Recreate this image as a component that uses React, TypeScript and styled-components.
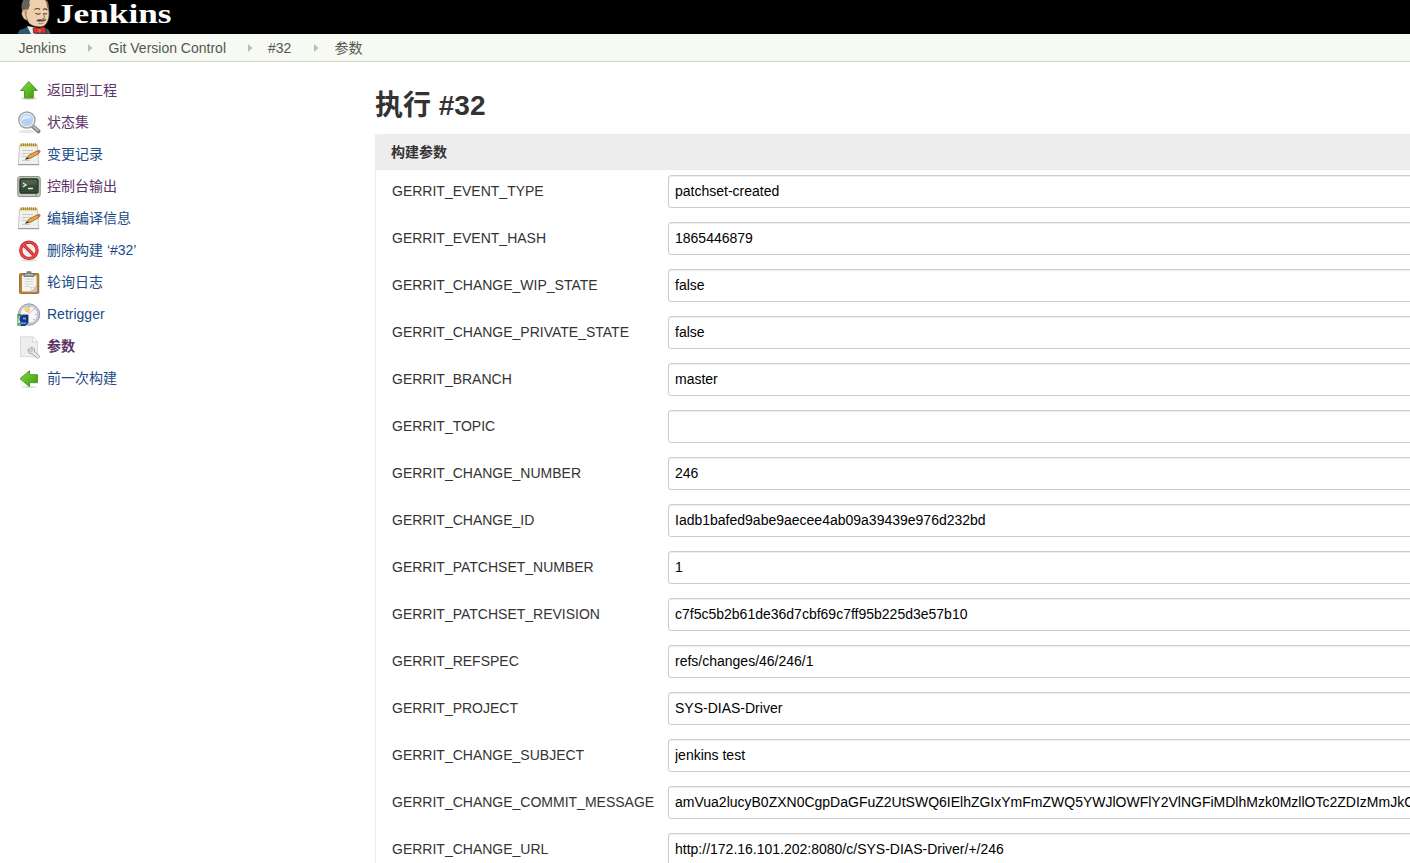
import React from "react";
import styled, { createGlobalStyle } from "styled-components";

const GlobalStyle = createGlobalStyle`
  *, *::before, *::after { box-sizing: border-box; }
  html { overflow: hidden; height: 100%; }
  body {
    margin: 0;
    height: 100%;
    overflow: hidden;
    background: #fff;
    color: #333;
    font: 14px/20px "Liberation Sans", "Noto Sans CJK SC", sans-serif;
  }
`;

const Page = styled.div`
  height: 863px;
  overflow: hidden;
`;

const Header = styled.header`
  height: 34px;
  background: #000;
  padding-left: 18px;
  svg { display: block; }
`;

const Breadcrumbs = styled.nav`
  height: 28px;
  display: flex;
  align-items: center;
  padding-left: 18.5px;
  background: #f6faf2;
  border-bottom: 1px solid #d3d7cf;
  color: #555753;
`;

const Crumb = styled.span<{ $width: number }>`
  flex: none;
  width: ${(p) => p.$width}px;
  white-space: nowrap;
`;

const Chevron = styled.svg<{ $gap: number }>`
  flex: none;
  width: 5px;
  height: 8px;
  margin-right: ${(p) => p.$gap}px;
`;

const Body = styled.div`
  display: flex;
`;

const Sidebar = styled.aside`
  flex: none;
  width: 375px;
  padding: 12px 0 0 17px;
`;

const Task = styled.div<{ $visited?: boolean; $bold?: boolean }>`
  height: 32px;
  display: flex;
  align-items: center;
  gap: 6px;
  color: ${(p) => (p.$visited ? "#5c3566" : "#204a87")};
  font-weight: ${(p) => (p.$bold ? 700 : 400)};
  svg { display: block; flex: none; width: 24px; height: 24px; overflow: visible; }
`;

const Main = styled.main`
  flex: none;
  width: 1060px;
`;

const Title = styled.h1`
  margin: 0;
  height: 72px;
  padding-top: 24px;
  font-size: 28px;
  line-height: 40px;
  font-weight: 700;
`;

const Panel = styled.section`
  border-left: 1px solid #eee;
`;

const PanelHead = styled.div`
  height: 36px;
  margin-left: -1px;
  padding-left: 16px;
  line-height: 36px;
  font-weight: 700;
  background: #ededed;
  border-radius: 4px 4px 0 0;
`;

const Row = styled.div`
  height: 47px;
  display: flex;
  padding: 5px 0 0 16px;
`;

const Label = styled.label`
  flex: none;
  width: 276px;
  line-height: 32px;
  white-space: nowrap;
`;

const Field = styled.input`
  flex: 1;
  height: 33px;
  padding: 0 6px 2px;
  border: 1px solid #ccc;
  border-radius: 3px;
  box-shadow: inset 0 1px 1px rgba(0, 0, 0, 0.075);
  background: #fff;
  color: #000;
  font: inherit;
  outline: none;
`;

const Butler = () => (
  <svg width="170" height="34" viewBox="18 0 170 34">
    <path d="M18 34c.5-3 1.500-4.500 5-5l4-2 14 2 6-.5c2 1 3 3 3.500 5.500z" fill="#2f566c" />
    <path d="M27 26l4 8h5l2-6z" fill="#e8eff2" />
    <path d="M23 8C24 1 29-3 36-3c8 0 12 4 12.500 10 .5 3 1 6 .5 10-1 6-4 10-8.500 10C34 27 29 25 27.500 20.500 24 20 22 17 21.500 13.500z" fill="#edcfae" stroke="#33211a" strokeWidth=".8" />
    <path d="M24-1c-2.500 3-3 8-2 11l2 1 1-2 3 1 2-5c-1.500-3 0-5 1.500-7z" fill="#64625f" />
    <path d="M22 10c3-1.500 4.500 0 4 3-.5 2 0 4 1.500 6.500" fill="#e0b38d" stroke="#7b513d" strokeWidth=".8" />
    <path d="M46-1c2 2 3 6 2.500 10l-1.500-2z" fill="#77706a" />
    <path d="M34.500 9.500q3-2 5.500 0M43 9.500q2.500-1.500 4.500.5" fill="none" stroke="#5b4334" strokeWidth="1.100" />
    <path d="M35.500 13.500q3 1.500 5 0M43.500 13.500q2 1.200 3.500 0" fill="none" stroke="#3f2c20" strokeWidth="1" />
    <path d="M43 13l1.500 4q.500 2-2 1.500" fill="none" stroke="#8c5f45" strokeWidth=".8" />
    <path d="M36 20.500q3-2 5.500-1 3 0 5-.5-1 3-5 2.300-3 1-5.500-.8z" fill="#51443c" />
    <path d="M38.500 23.500q3 .8 5-.5" stroke="#a56150" strokeWidth=".8" fill="none" />
    <path d="M33 28c2-1 4 0 5.500 1.500 2-2 5-3 6.500-2l1 5.500c-2 1-4.500-.3-6-2-2 2-4.500 3-6.500 2z" fill="#d8312c" stroke="#68201e" strokeWidth=".7" />
    <path d="M38 28.500h3v4h-3z" fill="#f15142" />
    <text x="56" y="22.500" textLength="115.500" lengthAdjust="spacingAndGlyphs" fill="#fff" fontFamily="Liberation Serif, serif" fontWeight="700" fontSize="28">Jenkins</text>
  </svg>
);

const ArrowUpIcon = () => (
  <svg viewBox="0 0 24 24">
    <defs>
      <linearGradient id="arrowUp" x2="1" y2="1">
        <stop stopColor="#8bdc45" /><stop offset="1" stopColor="#38960b" />
      </linearGradient>
    </defs>
    <ellipse cx="12" cy="20.500" rx="8" ry="1.300" fill="#000" opacity=".14" />
    <path d="M11.800 3.500l8.500 9h-4v7.500h-8.800v-7.500h-4z" fill="url(#arrowUp)" stroke="#4a9f28" strokeLinejoin="round" />
  </svg>
);

const ArrowLeftIcon = () => (
  <svg viewBox="0 0 24 24">
    <defs>
      <linearGradient id="arrowLeft" x2="1" y2="1">
        <stop stopColor="#8bdc45" /><stop offset="1" stopColor="#38960b" />
      </linearGradient>
    </defs>
    <ellipse cx="12" cy="21" rx="8" ry="1.200" fill="#000" opacity=".12" />
    <path d="M3 12.700l9.500-8v4h8v8h-8v4z" fill="url(#arrowLeft)" stroke="#4a9f28" strokeLinejoin="round" />
  </svg>
);

const SearchIcon = () => (
  <svg viewBox="0 0 24 24">
    <ellipse cx="10" cy="21.500" rx="8.500" ry="1.700" fill="#e7e7e7" />
    <path d="M15.500 16l6 5.300" stroke="#777" strokeWidth="4" strokeLinecap="round" />
    <path d="M16 16l5 4.500" stroke="#bbb" strokeWidth="2" strokeLinecap="round" />
    <circle cx="9.900" cy="10" r="7.800" fill="#b4d1f2" stroke="#a0a0a0" strokeWidth="2" />
    <circle cx="9.900" cy="10" r="6.800" fill="none" stroke="#f2f5f9" strokeWidth="1.100" />
    <path d="M4.500 10.500c0-4 3-6 7-5 2 1 3 2 3 3-4-1-6 1-10 2z" fill="#dcecff" />
  </svg>
);

const NotepadIcon = () => (
  <svg viewBox="0 0 24 24">
    <path d="M2.500 3.500h18l1.300 19H1.300z" fill="#f0f0ee" stroke="#bbb" strokeWidth=".8" />
    <path d="M1 22.700h21" stroke="#93938c" />
    <path d="M3 1.700h17.500v2.600H3z" fill="#d3bf5c" />
    <path d="M4.500 1.200v3m2-3v3m2-3v3m2-3v3m2-3v3m2-3v3m2-3v3m2-3v3" stroke="#8a7427" strokeWidth=".7" />
    <path d="M5 8.500h11M5 11.500h10M5 14.500h5M5 18.500h8" stroke="#cbcbcb" />
    <path d="M8.500 17.300l3.500-4L20.500 8.500l1.500 3-8.500 4.800z" fill="#e8a63c" stroke="#75572c" strokeWidth=".7" />
    <path d="M20.500 8.500l1.700-.8 1.600 2-1.800 1.500z" fill="#df5a3c" />
    <path d="M8 17.500l2.500-2.500 1.500 1.500z" fill="#38312a" />
  </svg>
);

const TerminalIcon = () => (
  <svg viewBox="0 0 24 24">
    <rect x=".8" y="2.600" width="22.400" height="20" rx="2" fill="#c6c8c1" stroke="#858981" />
    <rect x="2.900" y="4.800" width="18.200" height="14.400" rx="1" fill="#344c36" stroke="#192b1c" />
    <path d="M4 5.800h16v4.700Q12 10 4 13z" fill="#5a6956" opacity=".65" />
    <path d="M6 9l3 2-3 2M11 14.500h5" fill="none" stroke="#e0f1db" strokeWidth="1.300" />
    <path d="M18 21h2" stroke="#63a63b" />
  </svg>
);

const DeleteIcon = () => (
  <svg viewBox="0 0 24 24">
    <ellipse cx="12" cy="22.200" rx="8" ry="1.300" fill="#ddd" />
    <circle cx="11.900" cy="12.300" r="8.200" fill="#f4efef" stroke="#c01c20" strokeWidth="3.200" />
    <path d="M6.200 6.600l11.400 11.400" stroke="#c01c20" strokeWidth="3.200" />
    <circle cx="11.900" cy="12.300" r="8.200" fill="none" stroke="#e54848" strokeWidth="1.900" />
    <path d="M6.200 6.600l11.400 11.400" stroke="#e54848" strokeWidth="1.900" />
  </svg>
);

const ClipboardIcon = () => (
  <svg viewBox="0 0 24 24">
    <rect x="2.500" y="3.500" width="19.300" height="20" rx="1" fill="#b98234" stroke="#8a602d" strokeWidth=".8" />
    <path d="M5 5.500h14.500v16H5z" fill="#f6f6f5" />
    <path d="M7.500 9h9M7.500 11.500h9M7.500 14h9M7.500 16.500h5" stroke="#d0d0ce" />
    <path d="M19.500 16l-6 5.500h6z" fill="#c5c5c2" />
    <path d="M14 21.500q1-3-.5-4 3 .5 6-1.500z" fill="#fff" stroke="#aaa" strokeWidth=".5" />
    <path d="M7 6.500V4l3-.5V1.700h4v1.800l3 .5v2.500z" fill="#898c87" stroke="#636560" strokeWidth=".7" />
    <path d="M8 4.800h8" stroke="#c9cbc5" />
  </svg>
);

const RetriggerIcon = () => (
  <svg viewBox="0 0 24 24">
    <circle cx="12" cy="12.500" r="10.700" fill="#d2d3e1" stroke="#8c8da0" strokeWidth=".9" />
    <circle cx="12" cy="12.500" r="8.800" fill="#f6f6f5" stroke="#b5b6c7" strokeWidth="1" />
    <path d="M12 12L6.500 7Q9 4 12 4.500z" fill="#efda7d" />
    <path d="M8 9h5l-1-4M12 12l5-5" fill="none" stroke="#d8c489" strokeWidth=".8" />
    <path d="M12 4v1m7.500 7.500h-1M17.500 7l-.7.700m.7 10.300l-.7-.7" stroke="#777989" />
    <path d="M.4 12h4v2h-3v7.500h3v2.200h-4z" fill="#339a3b" />
    <path d="M3.500 14.500l2-1.500H11v7.500l-2.500 3H3.500L2.500 21l4.500-1-4-1z" fill="#1839a2" stroke="#10245f" strokeWidth=".8" />
    <path d="M5.500 15h4v3h-4z" fill="#67acd8" stroke="#173174" />
    <path d="M4 20.500h5v1.500H4z" fill="#45b7d8" />
    <path d="M1.500 21.500h2.500v2H1.500z" fill="#54dd50" />
  </svg>
);

const ParametersIcon = () => (
  <svg viewBox="0 0 24 24">
    <path d="M3.500 2.800h12l5 5v15h-17z" fill="#eee" stroke="#d3d3d3" strokeWidth=".8" />
    <path d="M15.500 2.800v5h5z" fill="#fff" stroke="#d2d2d2" strokeWidth=".8" />
    <path d="M11.500 14.500c-1 4 1 5.500 3.500 5l5.500 5 2.500-2-5.500-5c.5-3-1-4.500-4-3.800l2 2.300-1.500 1.500z" fill="#e0e0e0" stroke="#989898" strokeWidth=".8" />
    <path d="M16.500 18.500l5 4.500" stroke="#fafafa" />
  </svg>
);

const tasks = [
  { label: "返回到工程", icon: <ArrowUpIcon />, visited: true },
  { label: "状态集", icon: <SearchIcon />, visited: true },
  { label: "变更记录", icon: <NotepadIcon /> },
  { label: "控制台输出", icon: <TerminalIcon />, visited: true },
  { label: "编辑编译信息", icon: <NotepadIcon /> },
  { label: "删除构建 ‘#32’", icon: <DeleteIcon /> },
  { label: "轮询日志", icon: <ClipboardIcon /> },
  { label: "Retrigger", icon: <RetriggerIcon /> },
  { label: "参数", icon: <ParametersIcon />, visited: true, bold: true },
  { label: "前一次构建", icon: <ArrowLeftIcon /> },
];

const parameters: [string, string][] = [
  ["GERRIT_EVENT_TYPE", "patchset-created"],
  ["GERRIT_EVENT_HASH", "1865446879"],
  ["GERRIT_CHANGE_WIP_STATE", "false"],
  ["GERRIT_CHANGE_PRIVATE_STATE", "false"],
  ["GERRIT_BRANCH", "master"],
  ["GERRIT_TOPIC", ""],
  ["GERRIT_CHANGE_NUMBER", "246"],
  ["GERRIT_CHANGE_ID", "Iadb1bafed9abe9aecee4ab09a39439e976d232bd"],
  ["GERRIT_PATCHSET_NUMBER", "1"],
  ["GERRIT_PATCHSET_REVISION", "c7f5c5b2b61de36d7cbf69c7ff95b225d3e57b10"],
  ["GERRIT_REFSPEC", "refs/changes/46/246/1"],
  ["GERRIT_PROJECT", "SYS-DIAS-Driver"],
  ["GERRIT_CHANGE_SUBJECT", "jenkins test"],
  ["GERRIT_CHANGE_COMMIT_MESSAGE", "amVua2lucyB0ZXN0CgpDaGFuZ2UtSWQ6IElhZGIxYmFmZWQ5YWJlOWFlY2VlNGFiMDlhMzk0MzllOTc2ZDIzMmJkCg=="],
  ["GERRIT_CHANGE_URL", "http://172.16.101.202:8080/c/SYS-DIAS-Driver/+/246"],
];

const crumbs = [
  { label: "Jenkins", width: 69.5, gap: 15.5 },
  { label: "Git Version Control", width: 139.5, gap: 15 },
  { label: "#32", width: 46, gap: 15.5 },
  { label: "参数", width: 28, gap: 0 },
];

export default function App() {
  return (
    <Page>
      <GlobalStyle />
      <Header><Butler /></Header>
      <Breadcrumbs>
        {crumbs.map((c, i) => (
          <React.Fragment key={c.label}>
            <Crumb $width={c.width}>{c.label}</Crumb>
            {i < crumbs.length - 1 && (
              <Chevron $gap={c.gap} viewBox="0 0 5 8"><path d="M0 0l4.500 4L0 8z" fill="#babdb6" /></Chevron>
            )}
          </React.Fragment>
        ))}
      </Breadcrumbs>
      <Body>
        <Sidebar>
          {tasks.map((t) => (
            <Task key={t.label} $visited={t.visited} $bold={t.bold}>{t.icon}<span>{t.label}</span></Task>
          ))}
        </Sidebar>
        <Main>
          <Title>执行 #32</Title>
          <Panel>
            <PanelHead>构建参数</PanelHead>
            {parameters.map(([name, value]) => (
              <Row key={name}>
                <Label htmlFor={name}>{name}</Label>
                <Field id={name} value={value} readOnly />
              </Row>
            ))}
          </Panel>
        </Main>
      </Body>
    </Page>
  );
}
